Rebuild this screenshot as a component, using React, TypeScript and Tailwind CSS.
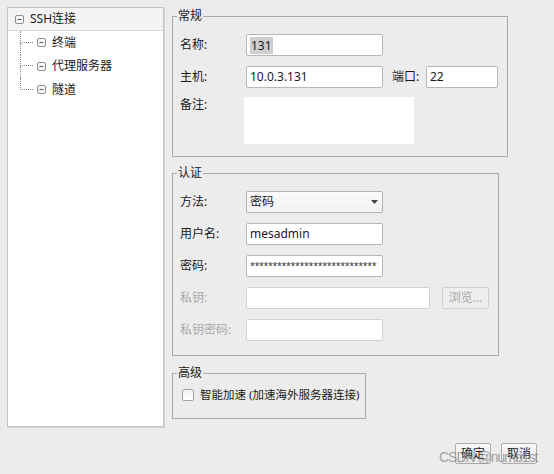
import React from "react";

const font = { fontFamily: '"Noto Sans", "Noto Sans CJK SC", sans-serif' };

function MinusBox({ size = 9 }: { size?: number }) {
  return (
    <svg width={size} height={size} viewBox="0 0 9 9" className="shrink-0">
      <rect x="0.5" y="0.5" width="8" height="8" rx="1.5" fill="#f7f7f7" stroke="#8f8f8f" />
      <line x1="2.5" y1="4.5" x2="6.5" y2="4.5" stroke="#555" strokeWidth="1" />
    </svg>
  );
}

function TreeItem({ label, last }: { label: string; last?: boolean }) {
  return (
    <div className="flex h-[23.5px] items-stretch">
      <div className="ml-[12px] flex w-[13px] flex-col">
        <div className="h-1/2 border-b border-l border-dotted border-[#8a8a8a]" />
        <div className={"h-1/2 " + (last ? "" : "border-l border-dotted border-[#8a8a8a]")} />
      </div>
      <div className="ml-[4px] flex items-center">
        <MinusBox />
        <span className="ml-[6px] text-[12px] leading-none text-[#1a1a1a]">{label}</span>
      </div>
    </div>
  );
}

function Input({ w, children, disabled }: { w: string; children?: React.ReactNode; disabled?: boolean }) {
  return (
    <div
      className={
        "flex h-[22px] items-center overflow-hidden rounded-[2px] border bg-white px-[3px] text-[12px] text-[#1a1a1a] " +
        (disabled ? "border-[#d2d2d2] " : "border-[#b8b8b8] ") +
        w
      }
    >
      {children}
    </div>
  );
}

function Label({ children, disabled, w = "w-[66px]" }: { children: React.ReactNode; disabled?: boolean; w?: string }) {
  return (
    <div className={"shrink-0 text-[12px] leading-[16px] " + w + (disabled ? " text-[#a8a8a8]" : " text-[#1a1a1a]")}>
      {children}
    </div>
  );
}

function Legend({ children }: { children: React.ReactNode }) {
  return (
    <legend className="ml-[4px] px-[1px] text-[12px] leading-[16px] text-[#1a1a1a]">{children}</legend>
  );
}

export default function App() {
  return (
    <div className="relative h-[474px] w-[554px] overflow-hidden bg-[#ececec]" style={font}>
      <div className="flex items-start pl-[7px] pt-[7px]">
        {/* Left tree panel */}
        <div className="flex h-[420px] w-[157px] flex-col border border-[#c4c4c4] bg-white shadow-[1px_1px_0_#d6d6d6]">
          <div className="flex h-[23px] items-center border-b border-[#d9d9d9] bg-[#f4f4f4] pl-[7px]">
            <MinusBox />
            <span className="ml-[6px] text-[12px] leading-none text-[#1a1a1a]">SSH连接</span>
          </div>
          <TreeItem label="终端" />
          <TreeItem label="代理服务器" />
          <TreeItem label="隧道" last />
        </div>

        {/* Right column */}
        <div className="ml-[8px] mt-[1px] flex flex-col">
          {/* 常规 */}
          <fieldset className="m-0 w-[336px] border border-[#a9a9a9] p-0">
            <Legend>常规</Legend>
            <div className="flex flex-col gap-[10px] pb-[12px] pl-[7px] pt-[10px]">
              <div className="flex items-center">
                <Label>名称:</Label>
                <Input w="w-[137px]">
                  <span className="bg-[#cfcfcf] px-px leading-[17px]">131</span>
                </Input>
              </div>
              <div className="flex items-center">
                <Label>主机:</Label>
                <Input w="w-[137px]">10.0.3.131</Input>
                <div className="ml-[9px] w-[34px] shrink-0 text-[12px] leading-[16px] text-[#1a1a1a]">端口:</div>
                <Input w="w-[72px]">22</Input>
              </div>
              <div className="-mt-px flex items-start">
                <Label w="w-[64px]">备注:</Label>
                <div className="h-[47px] w-[170px] bg-white" />
              </div>
            </div>
          </fieldset>

          {/* 认证 */}
          <fieldset className="m-0 mt-[8px] w-[327px] border border-[#a9a9a9] p-0">
            <Legend>认证</Legend>
            <div className="flex flex-col gap-[10px] pb-[14px] pl-[7px] pt-[10px]">
              <div className="flex items-center">
                <Label>方法:</Label>
                <div className="flex h-[22px] w-[137px] items-center justify-between rounded-[2px] border border-[#b3b3b3] bg-gradient-to-b from-[#fbfbfb] to-[#f1f1f1] pl-[3px] pr-[4px] text-[12px] text-[#1a1a1a]">
                  <span>密码</span>
                  <svg width="7" height="4" viewBox="0 0 7 4">
                    <path d="M0 0 H7 L3.5 4 Z" fill="#444" />
                  </svg>
                </div>
              </div>
              <div className="flex items-center">
                <Label>用户名:</Label>
                <Input w="w-[137px]">mesadmin</Input>
              </div>
              <div className="flex items-center">
                <Label>密码:</Label>
                <Input w="w-[137px]">
                  <span className="whitespace-nowrap text-[9px] tracking-[-0.45px] text-[#333]">
                    ****************************
                  </span>
                </Input>
              </div>
              <div className="flex items-center">
                <Label disabled>私钥:</Label>
                <Input w="w-[184px]" disabled />
                <div className="ml-[12px] flex h-[22px] w-[47px] items-center justify-center rounded-[2px] border border-[#cfcfcf] bg-[#eeeeee] text-[12px] text-[#a8a8a8]">
                  浏览...
                </div>
              </div>
              <div className="flex items-center">
                <Label disabled>私钥密码:</Label>
                <Input w="w-[137px]" disabled />
              </div>
            </div>
          </fieldset>

          {/* 高级 */}
          <fieldset className="m-0 mt-[9px] w-[194px] border border-[#a9a9a9] p-0">
            <Legend>高级</Legend>
            <div className="flex items-center pb-[15px] pl-[9px] pt-[6px]">
              <div className="h-[12px] w-[12px] rounded-[2px] border border-[#a3a3a3] bg-gradient-to-b from-[#f2f2f2] to-[#ffffff]" />
              <span className="ml-[6px] text-[11.5px] leading-[16px] text-[#1a1a1a]">智能加速 (加速海外服务器连接)</span>
            </div>
          </fieldset>
        </div>
      </div>

      {/* Buttons */}
      <div className="mt-[16px] flex justify-end gap-[10px] pr-[17px]">
        <div className="flex h-[21px] w-[36px] items-center justify-center rounded-[2px] border border-[#adadad] bg-gradient-to-b from-[#f8f8f8] to-[#e8e8e8] text-[12px] text-[#1a1a1a]">
          确定
        </div>
        <div className="flex h-[21px] w-[36px] items-center justify-center rounded-[2px] border border-[#adadad] bg-gradient-to-b from-[#f8f8f8] to-[#e8e8e8] text-[12px] text-[#1a1a1a]">
          取消
        </div>
      </div>

      {/* Watermark */}
      <div
        className="pointer-events-none absolute left-[439px] top-[449px] whitespace-nowrap text-[14px] leading-[16px] tracking-[-1px] text-[#8c8c8c]/80"
        style={{ fontFamily: '"Liberation Sans", Arial, sans-serif' }}
      >
        CSDN @numb1st
      </div>
    </div>
  );
}
